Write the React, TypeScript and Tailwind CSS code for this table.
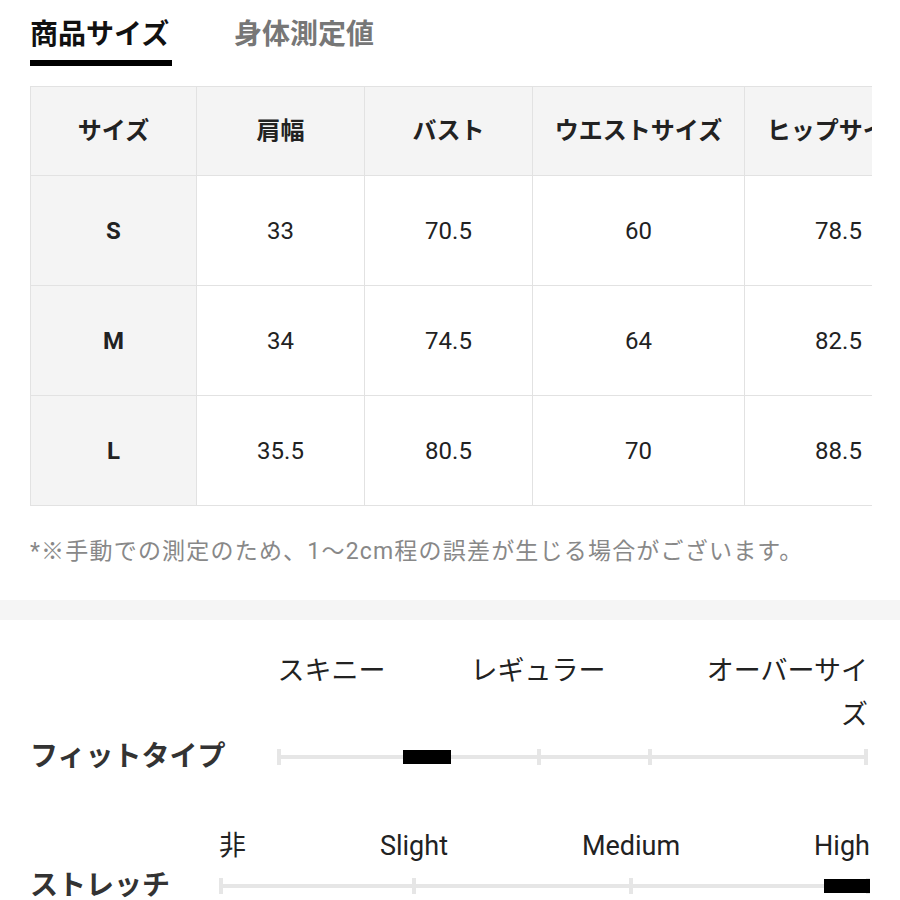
const sizes = [
  { size: 'S', shoulder: '33', bust: '70.5', waist: '60', hip: '78.5' },
  { size: 'M', shoulder: '34', bust: '74.5', waist: '64', hip: '82.5' },
  { size: 'L', shoulder: '35.5', bust: '80.5', waist: '70', hip: '88.5' },
];

const headers = ['サイズ', '肩幅', 'バスト', 'ウエストサイズ', 'ヒップサイズ'];

function Track({ ticks, bar }: { ticks: string[]; bar: string }) {
  return (
    <div className="relative h-[16px] w-full">
      <div className="absolute left-0 right-0 top-[6px] h-[4px] bg-[#e6e6e6]" />
      <div className="absolute left-0 top-0 h-[16px] w-[4px] bg-[#e6e6e6]" />
      <div className="absolute right-0 top-0 h-[16px] w-[4px] bg-[#e6e6e6]" />
      {ticks.map((t) => (
        <div key={t} className={`absolute top-0 h-[16px] w-[4px] bg-[#e6e6e6] ${t}`} />
      ))}
      <div className={`absolute top-[1px] h-[14px] bg-black ${bar}`} />
    </div>
  );
}

export default function App() {
  return (
    <div className="w-[900px] h-[900px] overflow-hidden bg-white font-['Roboto','Noto_Sans_CJK_JP',sans-serif] text-[#222]">
      <div className="px-[30px] pt-[16px]">
        <div className="flex gap-[62px]">
          <div className="inline-flex flex-col">
            <span className="text-[28px] leading-[38px] font-bold text-[#111]">商品サイズ</span>
            <span className="mt-[6px] h-[6px] w-[142px] bg-black" />
          </div>
          <span className="text-[28px] leading-[38px] font-bold text-[#777]">身体測定値</span>
        </div>

        <div className="mt-[20px] w-[842px] overflow-hidden">
          <table className="table-fixed border-collapse w-[902px]">
            <colgroup>
              <col className="w-[166px]" />
              <col className="w-[168px]" />
              <col className="w-[168px]" />
              <col className="w-[212px]" />
              <col className="w-[188px]" />
            </colgroup>
            <thead>
              <tr className="h-[89px] bg-[#f4f4f4]">
                {headers.map((h) => (
                  <th key={h} className="border border-[#e2e2e2] text-[24px] font-bold text-center align-middle whitespace-nowrap">
                    {h}
                  </th>
                ))}
              </tr>
            </thead>
            <tbody>
              {sizes.map((r) => (
                <tr key={r.size} className="h-[110px]">
                  <td className="border border-[#e2e2e2] bg-[#f4f4f4] text-center text-[24px] font-bold">{r.size}</td>
                  <td className="border border-[#e2e2e2] text-center text-[24px]">{r.shoulder}</td>
                  <td className="border border-[#e2e2e2] text-center text-[24px]">{r.bust}</td>
                  <td className="border border-[#e2e2e2] text-center text-[24px]">{r.waist}</td>
                  <td className="border border-[#e2e2e2] text-center text-[24px]">{r.hip}</td>
                </tr>
              ))}
            </tbody>
          </table>
        </div>

        <p className="mt-[31px] text-[23px] leading-[30px] tracking-[1.2px] text-[#888] whitespace-nowrap">
          *※手動での測定のため、1〜2cm程の誤差が生じる場合がございます。
        </p>
      </div>

      <div className="mt-[33px] h-[20px] bg-[#f5f5f5]" />

      <div className="pl-[30px] pr-[32px] pt-[29px]">
        <div className="grid grid-cols-[auto_1fr] gap-x-[52px] items-center">
          <div />
          <div className="grid grid-cols-[193px_1fr_170px] text-[27px] leading-[44px]">
            <span>スキニー</span>
            <span>レギュラー</span>
            <span className="text-right">オーバーサイズ</span>
          </div>
          <span className="text-[28px] leading-[40px] font-bold text-[#333]">フィットタイプ</span>
          <div className="h-[40px] flex items-center">
            <Track ticks={['left-[44%]', 'left-[62.8%]']} bar="left-[21.3%] w-[48px]" />
          </div>
        </div>
      </div>

      <div className="pl-[30px] pr-[30px] mt-[49px]">
        <div className="grid grid-cols-[auto_1fr] gap-x-[49px] items-center">
          <div />
          <div className="flex justify-between text-[27px] leading-[40px]">
            <span>非</span>
            <span>Slight</span>
            <span>Medium</span>
            <span>High</span>
          </div>
          <span className="text-[28px] leading-[40px] font-bold text-[#333]">ストレッチ</span>
          <div className="h-[40px] flex items-center">
            <Track ticks={['left-[29.6%]', 'left-[63%]']} bar="right-0 w-[46px]" />
          </div>
        </div>
      </div>
    </div>
  );
}
